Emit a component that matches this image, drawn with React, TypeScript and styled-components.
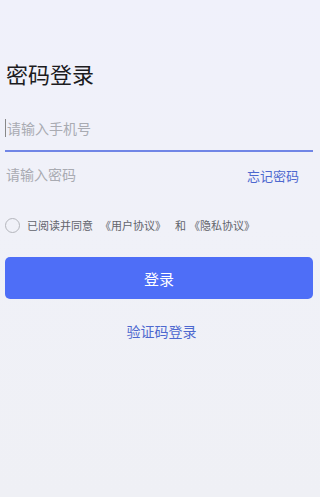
import React, { useState } from 'react';
import styled, { createGlobalStyle } from 'styled-components';

const GlobalStyle = createGlobalStyle`
  html, body {
    margin: 0;
    padding: 0;
  }
  body {
    font-family: "Noto Sans CJK SC", "Noto Sans", sans-serif;
    background: #eff0f5;
  }
  * {
    box-sizing: border-box;
  }
`;

const Page = styled.div`
  min-height: 497px;
  padding: 56px 7px 0 5px;
  background: linear-gradient(180deg, #f0f1fb 0%, #f0f1f8 45%, #eff0f5 100%);
  display: flex;
  flex-direction: column;
`;

const Title = styled.h1`
  margin: 0 0 16px 1px;
  font-size: 22px;
  line-height: 34px;
  font-weight: 400;
  color: #1c1c1e;
`;

const Field = styled.div<{ $active?: boolean }>`
  display: flex;
  align-items: center;
  height: 46px;
  border-bottom: 2px solid ${p => (p.$active ? '#7186e6' : 'transparent')};
`;

const Input = styled.input<{ $caret?: boolean }>`
  flex: 1;
  min-width: 0;
  border: none;
  outline: none;
  background: transparent;
  font-family: inherit;
  font-size: 14px;
  color: #333;
  padding: 0 0 0 1px;
  ${p => (p.$caret ? 'border-left: 1px solid #888;' : '')}
  height: 18px;
  line-height: 18px;

  &::placeholder {
    color: #a9abb2;
  }
`;

const LinkText = styled.span<{ $size?: number }>`
  color: #4d68cf;
  font-size: ${p => p.$size ?? 14}px;
  cursor: pointer;
`;

const Forgot = styled(LinkText)`
  margin: 2px 14px 0 0;
`;

const Agreement = styled.div`
  display: flex;
  align-items: center;
  margin-top: 16px;
  height: 22px;
  font-size: 11px;
  color: #62646c;
`;

const Radio = styled.span<{ $checked: boolean }>`
  width: 15px;
  height: 15px;
  border-radius: 50%;
  border: 1px solid #b4b6bc;
  background: ${p => (p.$checked ? '#4e6ef7' : 'transparent')};
  margin-right: 7px;
  flex-shrink: 0;
`;

const Doc = styled.span`
  margin-left: 7px;
`;

const And = styled.span`
  margin: 0 3px 0 9px;
`;

const LoginButton = styled.button`
  margin-top: 21px;
  height: 42px;
  width: 100%;
  border: none;
  border-radius: 5px;
  background: #4e6ef7;
  color: #fff;
  font-family: inherit;
  font-size: 15px;
  cursor: pointer;
`;

const Footer = styled.div`
  display: flex;
  justify-content: center;
  margin-top: 22px;
  padding-left: 5px;
`;

export default function App() {
  const [agreed, setAgreed] = useState(false);

  return (
    <>
      <GlobalStyle />
      <Page>
        <Title>密码登录</Title>
        <Field $active>
          <Input $caret placeholder="请输入手机号" />
        </Field>
        <Field>
          <Input type="password" placeholder="请输入密码" />
          <Forgot $size={13}>忘记密码</Forgot>
        </Field>
        <Agreement onClick={() => setAgreed(!agreed)}>
          <Radio $checked={agreed} />
          <span>已阅读并同意</span>
          <Doc>《用户协议》</Doc>
          <And>和</And>
          <span>《隐私协议》</span>
        </Agreement>
        <LoginButton>登录</LoginButton>
        <Footer>
          <LinkText>验证码登录</LinkText>
        </Footer>
      </Page>
    </>
  );
}
